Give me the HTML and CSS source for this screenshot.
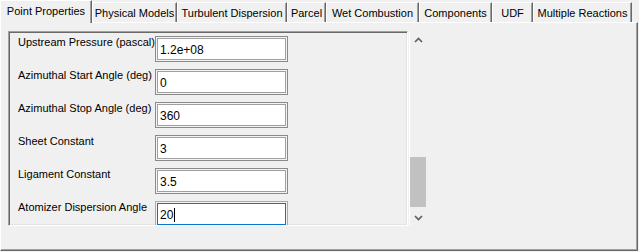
FILE: index.html
```html
<!DOCTYPE html>
<html>
<head>
<meta charset="utf-8">
<link rel="stylesheet" href="styles.css">
</head>
<body>
<div class="window">
  <div class="tabs">
    <div class="tab active tab-pp">Point Properties</div>
    <div class="tab tab-pm">Physical Models</div>
    <div class="tab tab-td">Turbulent Dispersion</div>
    <div class="tab tab-pa">Parcel</div>
    <div class="tab tab-wc">Wet Combustion</div>
    <div class="tab tab-co">Components</div>
    <div class="tab tab-udf">UDF</div>
    <div class="tab tab-mr">Multiple Reactions</div>
  </div>
  <div class="panel">
    <div class="area">
      <div class="scrollbox">
        <div class="form">
          <div class="label">Upstream Pressure (pascal)</div>
          <div class="field">1.2e+08</div>
          <div class="label">Azimuthal Start Angle (deg)</div>
          <div class="field">0</div>
          <div class="label">Azimuthal Stop Angle (deg)</div>
          <div class="field">360</div>
          <div class="label">Sheet Constant</div>
          <div class="field">3</div>
          <div class="label">Ligament Constant</div>
          <div class="field">3.5</div>
          <div class="label">Atomizer Dispersion Angle</div>
          <div class="field focused">20<span class="caret"></span></div>
        </div>
      </div>
      <div class="scrollbar">
        <div class="sb-btn">
          <svg width="9" height="6" viewBox="0 0 9 6"><path d="M1 5 L4.5 1.5 L8 5" fill="none" stroke="#606060" stroke-width="1.7"/></svg>
        </div>
        <div class="sb-track"><div class="sb-thumb"></div></div>
        <div class="sb-btn">
          <svg width="9" height="6" viewBox="0 0 9 6"><path d="M1 1 L4.5 4.5 L8 1" fill="none" stroke="#606060" stroke-width="1.7"/></svg>
        </div>
      </div>
    </div>
  </div>
</div>
</body>
</html>
```
FILE: styles.css
```css
html, body {
  margin: 0;
  padding: 0;
}
body {
  background: #f0f0f0;
  font-family: "Liberation Sans", Arial, sans-serif;
  font-size: 11px;
  color: #000;
  width: 639px;
  height: 252px;
  overflow: hidden;
}
.window {
  width: 639px;
}
.tabs {
  display: flex;
  height: 22px;
  align-items: flex-end;
  position: relative;
  z-index: 1;
}
.tab {
  box-sizing: border-box;
  height: 20px;
  border-left: 1px solid #fff;
  border-top: 1px solid #fff;
  border-right: 1px solid #696969;
  box-shadow: inset -1px 0 #a0a0a0;
  display: flex;
  align-items: center;
  justify-content: center;
  line-height: 13px;
  white-space: nowrap;
  padding-top: 1px;
}
.tab.active {
  height: 23px;
  margin-bottom: -1px;
  padding-top: 0;
  padding-bottom: 1px;
  background: #f0f0f0;
}
.tab-pp { width: 92px; }
.tab-pm { width: 85px; }
.tab-td { width: 110px; }
.tab-pa { width: 39px; }
.tab-wc { width: 93px; }
.tab-co { width: 73px; }
.tab-udf { width: 41px; }
.tab-mr { width: 99px; }

.panel {
  box-sizing: border-box;
  width: 638px;
  height: 229px;
  border-top: 1px solid #fff;
  border-left: 1px solid #fff;
  border-right: 1px solid #696969;
  border-bottom: 1px solid #696969;
  box-shadow: inset -1px -1px #a0a0a0;
  padding: 8px 0 0 7px;
}
.area {
  display: flex;
  gap: 1px;
  height: 195px;
}
.scrollbox {
  box-sizing: border-box;
  width: 400px;
  height: 195px;
  border-top: 1px solid #a0a0a0;
  border-left: 1px solid #a0a0a0;
  border-right: 1px solid #fff;
  border-bottom: 1px solid #fff;
  box-shadow: inset 1px 1px #696969, inset -1px -1px #e3e3e3;
  overflow: hidden;
  padding: 4px 0 0 9px;
}
.form {
  display: grid;
  grid-template-columns: 137px 133px;
  grid-auto-rows: 26px;
  row-gap: 7px;
}
.label {
  line-height: 13px;
  padding-top: 0;
  white-space: nowrap;
}
.field {
  box-sizing: border-box;
  height: 26px;
  border: 1px solid #8a8a8a;
  box-shadow: inset 0 0 0 1px #f4f4f4, inset 0 0 0 2px #a0a0a0;
  background: #fff;
  display: flex;
  align-items: center;
  padding: 1px 4px 0;
  font-size: 12px;
  line-height: 14px;
}
.field.focused {
  border-color: #7eb4ea;
  box-shadow: inset 0 0 0 1px #f4f4f4, inset 0 0 0 2px #0078d7;
}
.caret {
  display: inline-block;
  width: 1px;
  height: 14px;
  background: #000;
  margin-left: 1px;
}
.scrollbar {
  height: 195px;
  display: flex;
  flex-direction: column;
  border-left: 1px solid #fff;
  box-sizing: border-box;
  width: 18px;
}
.sb-btn {
  height: 17px;
  display: flex;
  align-items: center;
  justify-content: center;
}
.sb-track {
  flex: 1;
  display: flex;
  flex-direction: column;
  justify-content: flex-end;
  padding: 0 1px 2px 0;
}
.sb-thumb {
  height: 50px;
  background: #c1c1c1;
}
```
